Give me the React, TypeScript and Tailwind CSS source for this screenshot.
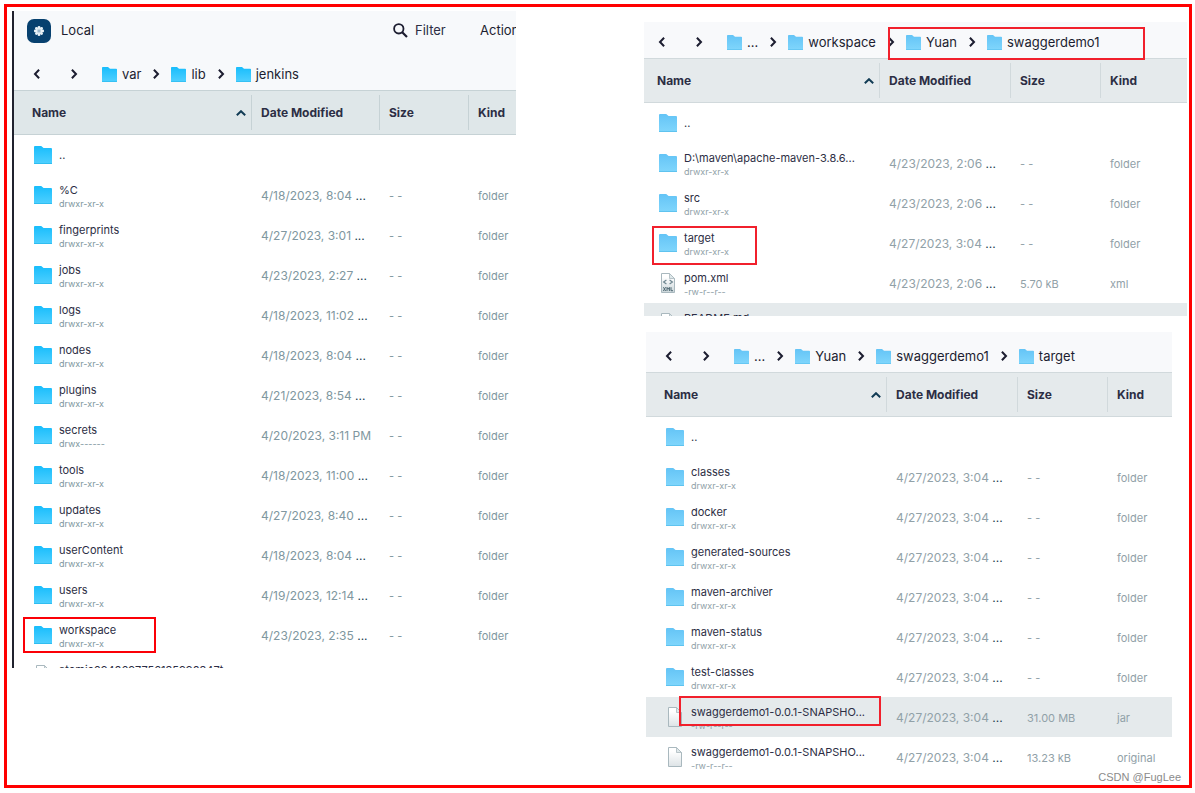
import { useId } from "react";
import type { ReactNode } from "react";
import clsx from "clsx";

type IconKind = "folder" | "xml" | "file";

interface Entry {
  name: string;
  mode?: string;
  date?: string;
  size?: string;
  kind?: string;
  icon?: IconKind;
  cut?: boolean;
  selected?: boolean;
  clipped?: boolean;
  mark?: "workspace" | "target" | "jar";
}

const folder = (name: string, date: string, cut = true): Entry => ({
  name,
  mode: "drwxr-xr-x",
  date,
  cut,
  size: "- -",
  kind: "folder",
});

const parent: Entry = { name: ".." };

const jenkinsEntries: Entry[] = [
  parent,
  folder("%C", "4/18/2023, 8:04"),
  folder("fingerprints", "4/27/2023, 3:01"),
  folder("jobs", "4/23/2023, 2:27"),
  folder("logs", "4/18/2023, 11:02"),
  folder("nodes", "4/18/2023, 8:04"),
  folder("plugins", "4/21/2023, 8:54"),
  { ...folder("secrets", "4/20/2023, 3:11 PM", false), mode: "drwx------" },
  folder("tools", "4/18/2023, 11:00"),
  folder("updates", "4/27/2023, 8:40"),
  folder("userContent", "4/18/2023, 8:04"),
  folder("users", "4/19/2023, 12:14"),
  { ...folder("workspace", "4/23/2023, 2:35"), mark: "workspace" },
  { name: "atomic6940697756135990347t", icon: "file", clipped: true },
];

const demoEntries: Entry[] = [
  parent,
  folder("D:\\maven\\apache-maven-3.8.6...", "4/23/2023, 2:06"),
  folder("src", "4/23/2023, 2:06"),
  { ...folder("target", "4/27/2023, 3:04"), mark: "target" },
  { name: "pom.xml", mode: "-rw-r--r--", date: "4/23/2023, 2:06", cut: true, size: "5.70 kB", kind: "xml", icon: "xml" },
  { name: "README.md", icon: "file", selected: true, clipped: true },
];

const targetEntries: Entry[] = [
  parent,
  folder("classes", "4/27/2023, 3:04"),
  folder("docker", "4/27/2023, 3:04"),
  folder("generated-sources", "4/27/2023, 3:04"),
  folder("maven-archiver", "4/27/2023, 3:04"),
  folder("maven-status", "4/27/2023, 3:04"),
  folder("test-classes", "4/27/2023, 3:04"),
  {
    name: "swaggerdemo1-0.0.1-SNAPSHO...",
    mode: "-rw-r--r--",
    date: "4/27/2023, 3:04",
    cut: true,
    size: "31.00 MB",
    kind: "jar",
    icon: "file",
    selected: true,
    mark: "jar",
  },
  {
    name: "swaggerdemo1-0.0.1-SNAPSHO...",
    mode: "-rw-r--r--",
    date: "4/27/2023, 3:04",
    cut: true,
    size: "13.23 kB",
    kind: "original",
    icon: "file",
  },
];

function FolderIcon({ className, pale }: { className: string; pale?: boolean }) {
  const id = useId();
  return (
    <svg viewBox="0 0 18 18" className={className} aria-hidden="true">
      <defs>
        <linearGradient id={id} x1="0" y1="0" x2="0" y2="1">
          <stop offset="0" stopColor={pale ? "#64c4f6" : "#18bdfc"} />
          <stop offset="1" stopColor={pale ? "#80d6fc" : "#50d0ff"} />
        </linearGradient>
      </defs>
      <path d="M0 1Q0 0 1 0H7.2L9.6 2H17Q18 2 18 3V17.5Q18 18 17.5 18H.5Q0 18 0 17.5Z" fill={`url(#${id})`} />
      <path d="M0 17.5H18" stroke={pale ? "#5fc3ef" : "#2fbdf0"} strokeWidth="1" />
    </svg>
  );
}

function FileIcon({ xml }: { xml?: boolean }) {
  const id = useId();
  return (
    <svg viewBox="0 0 14 20" className="h-5 w-3.5" aria-hidden="true">
      <defs>
        <linearGradient id={id} x1="0" y1="0" x2="0" y2="1">
          <stop offset="0.2" stopColor="#ffffff" />
          <stop offset="1" stopColor={xml ? "#cbd6da" : "#dde3e6"} />
        </linearGradient>
      </defs>
      <path d="M.5 .5H8.5L13.5 5.5V19.5H.5Z" fill={`url(#${id})`} stroke="#a9b8be" />
      <path d="M8.5 .5V5.5H13.5Z" fill="#dfe8ea" stroke="#a9b8be" strokeWidth=".8" />
      {xml && (
        <>
          <path d="M5.4 7L2.6 9L5.4 11M8.6 7L11.4 9L8.6 11" fill="none" stroke="#6f8791" strokeWidth="1.2" />
          <path
            d="M2.4 14.2L4.6 18M4.6 14.2L2.4 18M6 18V14.4L7.2 16.2L8.4 14.4V18M10 14.2V17.7H12"
            fill="none"
            stroke="#4f6873"
            strokeWidth="1"
          />
        </>
      )}
    </svg>
  );
}

function Chevron({ className = "" }: { className?: string }) {
  return (
    <svg viewBox="0 0 6 10" className={clsx("h-2.5 w-1.5 shrink-0 overflow-visible", className)} aria-hidden="true">
      <path d="M.9 .8L5 5L.9 9.2" fill="none" stroke="#1c1d30" strokeWidth="2" />
    </svg>
  );
}

function Breadcrumbs({ path, pale, className }: { path: string[]; pale?: boolean; className: string }) {
  return (
    <nav aria-label="Path" className={clsx("flex items-center text-[13px] leading-4 text-[#1c1d30]", className)}>
      <button type="button" aria-label="Back" className="mr-[31px]">
        <Chevron className="rotate-180" />
      </button>
      <button type="button" aria-label="Forward" className="mr-[25px]">
        <Chevron />
      </button>
      {path.map((part, i) => (
        <div key={part} className="flex shrink-0 items-center">
          {i > 0 && <Chevron className="mx-3" />}
          <button type="button" className="flex items-center gap-[5px]">
            <FolderIcon className="size-[15px]" pale={pale} />
            {part}
          </button>
        </div>
      ))}
    </nav>
  );
}

// Red annotation frames drawn over a row
const markStyles = {
  workspace: "-left-[9px] top-0.5 h-9 w-[133px] border-[#fb0007]",
  target: "-left-[5px] top-[3px] h-[39px] w-[105px] border-[#f1202c]",
  jar: "left-[15px] -top-px h-[30px] w-[202px] border-[#f1202c]",
};

function Row({ entry, pale, inset }: { entry: Entry; pale?: boolean; inset: string }) {
  const icon = entry.icon ?? "folder";
  const muted = pale ? "text-[#91a1a8]" : "text-[#8097a0]";

  return (
    <tr className={clsx("align-top", entry.selected && "bg-[#e5eaec]")}>
      <td className={inset}>
        <div className={clsx("relative flex gap-[7px] pl-0.5", entry.clipped ? "h-[13px] overflow-hidden" : "h-10")}>
          <span className="flex h-10 w-[18px] shrink-0 items-center justify-center">
            {icon === "folder" ? <FolderIcon className="size-[18px]" pale={pale} /> : <FileIcon xml={icon === "xml"} />}
          </span>
          <div className={clsx("whitespace-nowrap", entry.mode || entry.clipped ? "pt-[7px]" : "pt-3")}>
            <div className="text-[11px] leading-4 text-[#2c2e44]">{entry.name}</div>
            <div className={clsx("text-[9px] leading-3", muted)}>{entry.mode}</div>
          </div>
          {entry.mark && <span className={clsx("pointer-events-none absolute z-10 border-2", markStyles[entry.mark])} />}
        </div>
      </td>
      <Cell className={clsx("text-xs/4", muted)}>
        {entry.date}
        {entry.cut && <span className="text-[#1d3c50]"> ...</span>}
      </Cell>
      <Cell className={clsx("text-[11px]/4", muted)}>{entry.size}</Cell>
      <Cell className={clsx("text-[11px]/4", muted)}>{entry.kind}</Cell>
    </tr>
  );
}

function Cell({ className, children }: { className: string; children?: ReactNode }) {
  return <td className={clsx("pt-[13px] pl-[9px] whitespace-nowrap", className)}>{children}</td>;
}

interface FileTableProps {
  entries: Entry[];
  pale?: boolean;
  inset: string;
  dateCol: string;
  sizeCol: string;
  kindCol: string;
}

function FileTable({ entries, pale, inset, dateCol, sizeCol, kindCol }: FileTableProps) {
  const line = pale ? "border-[#d1d9dc]" : "border-[#c6d2d5]";
  const headCell = clsx("flex h-[35px] items-center", line);

  return (
    <table className="w-full table-fixed text-left">
      <colgroup>
        <col />
        <col className={dateCol} />
        <col className={sizeCol} />
        <col className={kindCol} />
      </colgroup>
      <thead>
        <tr className={clsx("h-11 border-y text-xs text-[#2c2e44]", line, pale ? "bg-[#e5eaec]" : "bg-[#dfe7e9]")}>
          <th className={inset}>
            <div className={clsx(headCell, "border-r pr-[5px]")}>
              <button type="button" className="flex w-full items-center justify-between font-bold">
                Name
                <svg viewBox="0 0 10 6" className="h-1.5 w-2.5" aria-hidden="true">
                  <path d="M.8 5.2L5 1.2L9.2 5.2" fill="none" stroke="#123c55" strokeWidth="2" />
                </svg>
              </button>
            </div>
          </th>
          <th>
            <div className={clsx(headCell, "border-r pl-[9px]")}>Date Modified</div>
          </th>
          <th>
            <div className={clsx(headCell, "border-r pl-[9px]")}>Size</div>
          </th>
          <th>
            <div className={clsx(headCell, "pl-[9px]")}>Kind</div>
          </th>
        </tr>
      </thead>
      <tbody>
        {entries.map((entry, i) => (
          <Row key={i} entry={entry} pale={pale} inset={inset} />
        ))}
      </tbody>
    </table>
  );
}

function LocalToolbar() {
  return (
    <div className="flex h-[39px] items-center pl-[13px] text-[13px] text-[#1c1d30]">
      <span className="flex size-6 items-center justify-center rounded-[7px] bg-[#07416f]">
        <svg viewBox="0 0 12 12" className="size-3" aria-hidden="true">
          <g fill="#e9f2f7">
            <circle cx="6" cy="2.3" r="1.4" />
            <circle cx="6" cy="9.7" r="1.4" />
            <circle cx="2.3" cy="6" r="1.4" />
            <circle cx="9.7" cy="6" r="1.4" />
            <circle cx="3.4" cy="3.4" r="1.4" />
            <circle cx="8.6" cy="3.4" r="1.4" />
            <circle cx="3.4" cy="8.6" r="1.4" />
            <circle cx="8.6" cy="8.6" r="1.4" />
            <circle cx="6" cy="6" r="3.2" />
          </g>
          <path d="M6 3.8V8.2M4.1 4.9L7.9 7.1M7.9 4.9L4.1 7.1" stroke="#7fa3bd" strokeWidth=".7" />
        </svg>
      </span>
      <span className="ml-2.5">Local</span>
      <div className="ml-auto flex w-[123px] shrink-0 items-center overflow-hidden">
        <label className="flex shrink-0 items-center">
          <svg viewBox="0 0 15 15" className="mr-[7px] size-[15px]" aria-hidden="true">
            <circle cx="5.8" cy="5.8" r="4.7" fill="none" stroke="#1c1d30" strokeWidth="1.8" />
            <path d="M9.2 9.2L14 14" stroke="#1c1d30" strokeWidth="2.2" />
          </svg>
          <input
            type="text"
            aria-label="Filter"
            placeholder="Filter"
            className="w-[65px] bg-transparent outline-none placeholder:text-[#2c2e44]"
          />
        </label>
        <button type="button" className="shrink-0">
          Actions
        </button>
      </div>
    </div>
  );
}

export default function App() {
  return (
    <main className="flex min-h-screen bg-white pt-1 pr-[3px] pb-[5px] pl-1 font-['Inter',sans-serif]">
      <div className="relative grid flex-1 grid-cols-[504fr_543fr] items-start gap-x-32 border-3 border-[#ff0000] pt-1 pr-0.5 pl-[5px]">
        <section className="min-w-0 overflow-hidden border-l-2 border-[#20222e]">
          <div className="bg-[#f7f9fb]">
            <LocalToolbar />
            <Breadcrumbs path={["var", "lib", "jenkins"]} className="h-10 pt-2 pl-5" />
          </div>
          <FileTable
            entries={jenkinsEntries}
            inset="pl-[18px]"
            dateCol="w-[128px]"
            sizeCol="w-[89px]"
            kindCol="w-[47px]"
          />
        </section>

        <div className="flex min-w-0 flex-col gap-4 pt-[11px]">
          <section>
            <div className="relative bg-[#f8f9fb]">
              <Breadcrumbs pale path={["...", "workspace", "Yuan", "swaggerdemo1"]} className="h-9 pt-1 pl-[15px]" />
              <span className="pointer-events-none absolute top-[5px] left-[244px] h-[33px] w-[257px] border-2 border-[#f1202c]" />
            </div>
            <FileTable
              pale
              entries={demoEntries}
              inset="pl-[13px]"
              dateCol="w-[131px]"
              sizeCol="w-[90px]"
              kindCol="w-[86px]"
            />
          </section>

          <section className="mr-[15px] ml-0.5">
            <Breadcrumbs
              pale
              path={["...", "Yuan", "swaggerdemo1", "target"]}
              className="h-10 bg-[#f8f9fb] pt-2 pl-5"
            />
            <FileTable
              pale
              entries={targetEntries}
              inset="pl-[18px]"
              dateCol="w-[131px]"
              sizeCol="w-[90px]"
              kindCol="w-[64px]"
            />
          </section>
        </div>

        <span className="absolute right-2 bottom-0.5 font-['Liberation_Sans',sans-serif] text-[11px] leading-3 text-[#8b8b8b]">
          CSDN @FugLee
        </span>
      </div>
    </main>
  );
}
